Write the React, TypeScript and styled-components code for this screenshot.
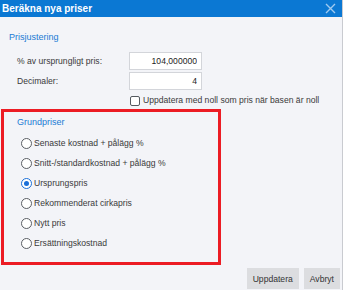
import React, { useState } from "react";
import styled, { createGlobalStyle } from "styled-components";

const GlobalStyle = createGlobalStyle`
  html, body {
    margin: 0;
    padding: 0;
    background: #ffffff;
  }
  body {
    font-family: "Liberation Sans", Arial, sans-serif;
    font-size: 8.6px;
    color: #3a3a3a;
  }
`;

const Dialog = styled.div`
  width: 342px;
  height: 290px;
  background: #f3f4f8;
  border-right: 1px solid #c9cbd0;
  display: flex;
  flex-direction: column;
  overflow: hidden;
`;

const TitleBar = styled.div`
  height: 17px;
  background: #0b78d3;
  color: #ffffff;
  font-weight: bold;
  font-size: 10px;
  display: flex;
  align-items: center;
  justify-content: space-between;
  padding: 0 6px 0 2px;
  flex-shrink: 0;
`;

const CloseButton = styled.button`
  border: 0;
  background: transparent;
  padding: 0;
  width: 11px;
  height: 11px;
  display: flex;
  cursor: pointer;
`;

const Body = styled.div`
  flex: 1;
  display: flex;
  flex-direction: column;
`;

const Section = styled.div`
  padding: 15px 0 0 9px;
  display: flex;
  flex-direction: column;
`;

const SectionTitle = styled.div`
  color: #1a7ad4;
  font-size: 9px;
  line-height: 11px;
`;

const FieldGrid = styled.div`
  display: grid;
  grid-template-columns: 120px 73px;
  row-gap: 2px;
  margin-top: 9px;
  align-items: center;
`;

const FieldLabel = styled.label`
  padding-left: 8px;
  line-height: 17px;
`;

const NumberInput = styled.input`
  box-sizing: border-box;
  width: 73px;
  height: 18px;
  border: 1px solid #d3d5da;
  background: #ffffff;
  text-align: right;
  font: inherit;
  color: #222;
  padding: 0 4px 0 2px;
  outline: none;
`;

const CheckRow = styled.label`
  display: flex;
  align-items: center;
  gap: 3px;
  margin: 5px 0 0 121px;
  line-height: 11px;
  white-space: nowrap;
`;

const CheckBox = styled.span`
  box-sizing: border-box;
  width: 10px;
  height: 10px;
  border: 1px solid #555a60;
  border-radius: 2px;
  background: #ffffff;
  flex-shrink: 0;
`;

const Highlight = styled.div`
  box-sizing: border-box;
  width: 220px;
  height: 156px;
  margin: 3px 0 0 1px;
  border: 3px solid #ec1c24;
  padding: 5px 0 0 13px;
  display: flex;
  flex-direction: column;
`;

const RadioList = styled.div`
  display: flex;
  flex-direction: column;
  gap: 8px;
  margin-top: 9px;
  padding-left: 4px;
`;

const RadioRow = styled.label`
  display: flex;
  align-items: center;
  gap: 2px;
  height: 12px;
  cursor: pointer;
  white-space: nowrap;
`;

const RadioDot = styled.span<{ $checked: boolean }>`
  box-sizing: border-box;
  width: 11px;
  height: 11px;
  border-radius: 50%;
  border: 1px solid ${(p) => (p.$checked ? "#1a6fd8" : "#5a5e64")};
  background: #ffffff;
  display: flex;
  align-items: center;
  justify-content: center;
  flex-shrink: 0;
  &::after {
    content: "";
    width: 5px;
    height: 5px;
    border-radius: 50%;
    background: ${(p) => (p.$checked ? "#1a6fd8" : "transparent")};
  }
`;

const Footer = styled.div`
  display: flex;
  justify-content: flex-end;
  gap: 5px;
  margin-top: auto;
  padding: 0 2px 1px 0;
`;

const Button = styled.button`
  height: 21px;
  padding: 0 6px;
  border: 0;
  background: #dcdde0;
  color: #333;
  font: inherit;
  cursor: pointer;
`;

const options = [
  "Senaste kostnad + pålägg %",
  "Snitt-/standardkostnad + pålägg %",
  "Ursprungspris",
  "Rekommenderat cirkapris",
  "Nytt pris",
  "Ersättningskostnad",
];

export default function App() {
  const [selected, setSelected] = useState("Ursprungspris");

  return (
    <>
      <GlobalStyle />
      <Dialog>
        <TitleBar>
          <span>Beräkna nya priser</span>
          <CloseButton aria-label="Stäng">
            <svg width="11" height="11" viewBox="0 0 11 11">
              <path d="M1 1L10 10M10 1L1 10" stroke="#9fcaf0" strokeWidth="1.4" />
            </svg>
          </CloseButton>
        </TitleBar>
        <Body>
          <Section>
            <SectionTitle>Prisjustering</SectionTitle>
            <FieldGrid>
              <FieldLabel>% av ursprungligt pris:</FieldLabel>
              <NumberInput defaultValue="104,000000" />
              <FieldLabel>Decimaler:</FieldLabel>
              <NumberInput defaultValue="4" />
            </FieldGrid>
            <CheckRow>
              <CheckBox />
              Uppdatera med noll som pris när basen är noll
            </CheckRow>
          </Section>
          <Highlight>
            <SectionTitle>Grundpriser</SectionTitle>
            <RadioList>
              {options.map((o) => (
                <RadioRow key={o} onClick={() => setSelected(o)}>
                  <RadioDot $checked={selected === o} />
                  {o}
                </RadioRow>
              ))}
            </RadioList>
          </Highlight>
          <Footer>
            <Button>Uppdatera</Button>
            <Button>Avbryt</Button>
          </Footer>
        </Body>
      </Dialog>
    </>
  );
}
